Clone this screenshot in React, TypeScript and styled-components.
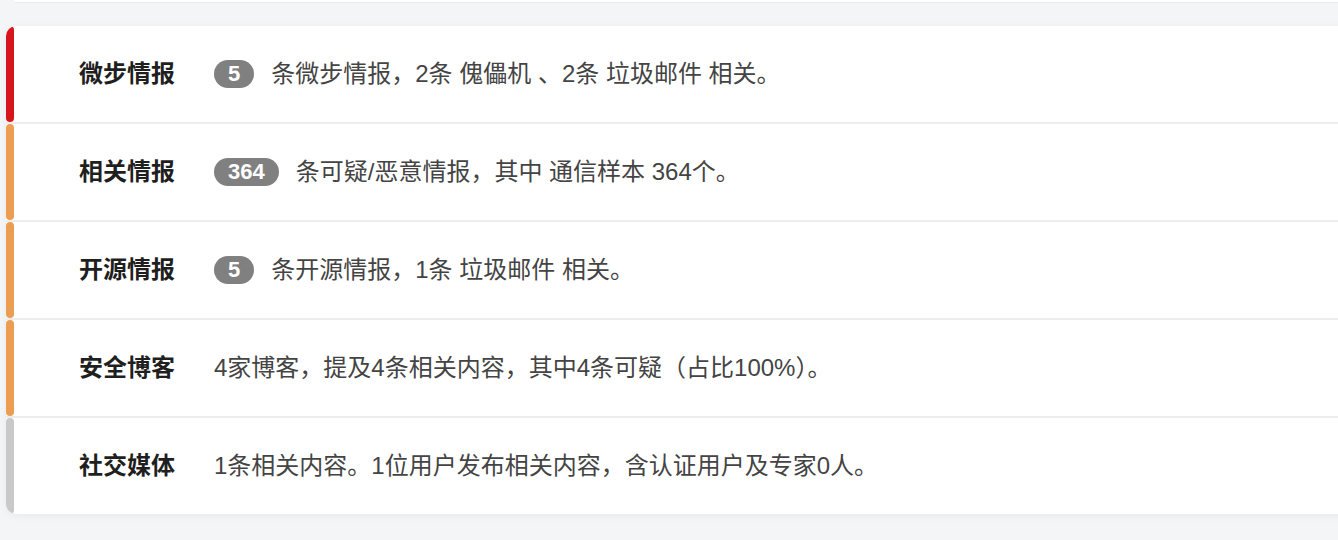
import React from 'react';
import styled, { createGlobalStyle } from 'styled-components';

const GlobalStyle = createGlobalStyle`
  html, body {
    margin: 0;
    padding: 0;
    background: #f4f5f7;
    overflow: hidden;
  }
  body {
    font-family: 'Liberation Sans', 'Noto Sans CJK SC', sans-serif;
  }
`;

const Page = styled.div`
  width: 1338px;
  height: 540px;
  overflow: hidden;
`;

const TopCard = styled.div`
  height: 2px;
  margin-left: 14px;
  margin-right: -20px;
  background: #fff;
  border-bottom: 1px solid #e9eaec;
  border-bottom-left-radius: 10px;
`;

const Card = styled.div`
  margin: 23px -20px 0 6px;
  background: #fff;
  border-radius: 10px;
  overflow: hidden;
  box-shadow: 0 2px 8px rgba(0, 0, 0, 0.05);
  display: flex;
  flex-direction: column;
`;

const Row = styled.div`
  display: flex;
  height: 96px;
  border-bottom: 2px solid #ececec;
  &:last-child {
    border-bottom: none;
  }
`;

const Bar = styled.div<{ $color: string }>`
  width: 8px;
  flex-shrink: 0;
  border-radius: 4px;
  background: ${({ $color }) => $color};
`;

const Content = styled.div`
  display: flex;
  align-items: center;
  padding-left: 65px;
  font-size: 24px;
  line-height: 1;
`;

const Label = styled.div`
  width: 135px;
  flex-shrink: 0;
  font-weight: bold;
  color: #1f1f1f;
`;

const Badge = styled.span`
  display: inline-flex;
  align-items: center;
  justify-content: center;
  height: 28px;
  padding: 0 14px;
  margin-right: 17px;
  border-radius: 14px;
  background: #808080;
  color: #fff;
  font-weight: bold;
  font-size: 22px;
`;

const Text = styled.span`
  color: #444;
  white-space: nowrap;
`;

interface Item {
  label: string;
  color: string;
  count?: string;
  text: string;
}

const items: Item[] = [
  { label: '微步情报', color: '#d7151c', count: '5', text: '条微步情报，2条 傀儡机 、2条 垃圾邮件 相关。' },
  { label: '相关情报', color: '#eb9d52', count: '364', text: '条可疑/恶意情报，其中 通信样本 364个。' },
  { label: '开源情报', color: '#eb9d52', count: '5', text: '条开源情报，1条 垃圾邮件 相关。' },
  { label: '安全博客', color: '#eb9d52', text: '4家博客，提及4条相关内容，其中4条可疑（占比100%）。' },
  { label: '社交媒体', color: '#c9c9c9', text: '1条相关内容。1位用户发布相关内容，含认证用户及专家0人。' },
];

export default function App(): JSX.Element {
  return (
    <Page>
      <GlobalStyle />
      <TopCard />
      <Card>
        {items.map(item => (
          <Row key={item.label}>
            <Bar $color={item.color} />
            <Content>
              <Label>{item.label}</Label>
              {item.count && <Badge>{item.count}</Badge>}
              <Text>{item.text}</Text>
            </Content>
          </Row>
        ))}
      </Card>
    </Page>
  );
}
